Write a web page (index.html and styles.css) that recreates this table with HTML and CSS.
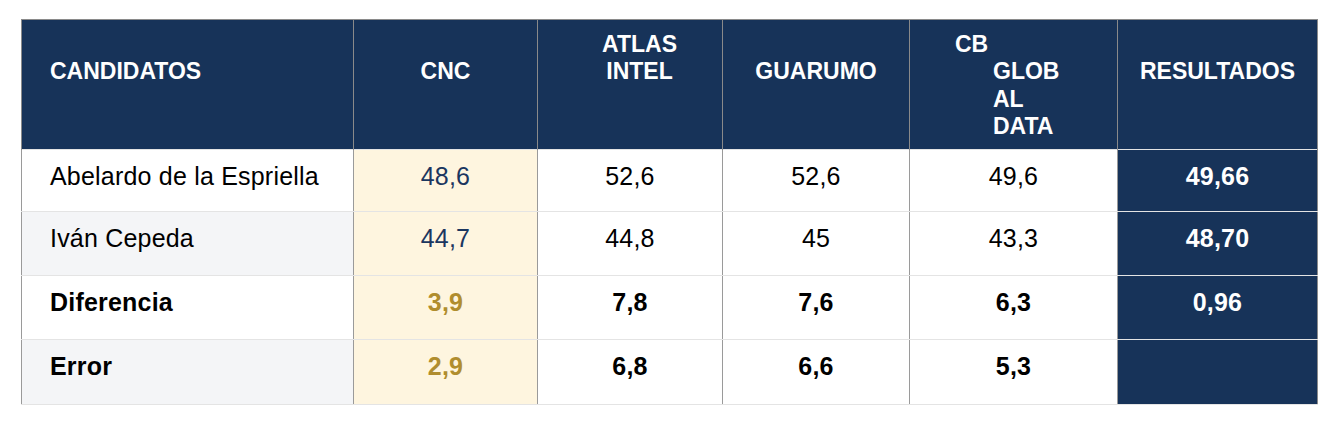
FILE: index.html
```html
<!DOCTYPE html>
<html lang="es">
<head>
<meta charset="utf-8">
<title>Encuestas vs resultados</title>
<link rel="stylesheet" href="styles.css">
</head>
<body>
<table class="poll">
  <colgroup>
    <col class="c-cand">
    <col class="c-cnc">
    <col class="c-atlas">
    <col class="c-guarumo">
    <col class="c-cb">
    <col class="c-res">
  </colgroup>
  <thead>
    <tr>
      <th class="h-left h-line2">CANDIDATOS</th>
      <th class="h-line2">CNC</th>
      <th class="h-atlas">ATLAS<br>INTEL</th>
      <th class="h-line2">GUARUMO</th>
      <th class="h-cb"><span class="cb-first">CB</span><span class="cb-rest">GLOB</span><span class="cb-rest">AL</span><span class="cb-rest">DATA</span></th>
      <th class="h-line2 res">RESULTADOS</th>
    </tr>
  </thead>
  <tbody>
    <tr class="r1">
      <td class="name">Abelardo de la Espriella</td>
      <td class="cnc">48,6</td>
      <td>52,6</td>
      <td>52,6</td>
      <td>49,6</td>
      <td class="res">49,66</td>
    </tr>
    <tr class="r2 alt">
      <td class="name">Iván Cepeda</td>
      <td class="cnc">44,7</td>
      <td>44,8</td>
      <td>45</td>
      <td>43,3</td>
      <td class="res">48,70</td>
    </tr>
    <tr class="r3 strong">
      <td class="name">Diferencia</td>
      <td class="cnc gold">3,9</td>
      <td>7,8</td>
      <td>7,6</td>
      <td>6,3</td>
      <td class="res">0,96</td>
    </tr>
    <tr class="r4 strong alt">
      <td class="name">Error</td>
      <td class="cnc gold">2,9</td>
      <td>6,8</td>
      <td>6,6</td>
      <td>5,3</td>
      <td class="res"></td>
    </tr>
  </tbody>
</table>
</body>
</html>
```
FILE: styles.css
```css
html, body {
  margin: 0;
  padding: 0;
  background: #ffffff;
}

body {
  padding: 19px 0 0 21px;
  font-family: "Liberation Sans", Arial, Helvetica, sans-serif;
}

.poll {
  border-collapse: collapse;
  table-layout: fixed;
  width: 1296px;
  border-top: 1px solid #8a8a8a;
  border-left: 1px solid #8a8a8a;
  border-right: 1px solid #8a8a8a;
  border-bottom: 1px solid #e4e4e4;
}

.c-cand { width: 332px; }
.c-cnc { width: 184px; }
.c-atlas { width: 185px; }
.c-guarumo { width: 187px; }
.c-cb { width: 208px; }
.c-res { width: 200px; }

/* header */
.poll th {
  background: #173359;
  color: #ffffff;
  font-size: 23px;
  font-weight: 700;
  line-height: 27.4px;
  height: 130px;
  box-sizing: border-box;
  vertical-align: top;
  text-align: center;
  padding: 11px 0 0 0;
  border-left: 1px solid #8a8a8a;
  border-right: 1px solid #8a8a8a;
}

.poll th.h-line2 {
  padding-top: 38px;
}

.poll th.h-left {
  text-align: left;
  padding-left: 28px;
}

.poll th.h-atlas {
  padding-left: 19px;
}

.poll th.h-cb {
  text-align: left;
}

.cb-first {
  display: block;
  padding-left: 45px;
}

.cb-rest {
  display: block;
  padding-left: 83px;
}

/* body */
.poll td {
  font-size: 25px;
  letter-spacing: 0.2px;
  line-height: 28px;
  color: #000000;
  text-align: center;
  vertical-align: top;
  padding: 12px 0 0 0;
  background: #ffffff;
  border-top: 1px solid #e4e4e4;
  border-bottom: 1px solid #e4e4e4;
  border-left: 1px solid #9a9a9a;
  border-right: 1px solid #9a9a9a;
}

.poll tr.r1 td { height: 62px; box-sizing: border-box; }
.poll tr.r2 td,
.poll tr.r3 td { height: 64px; box-sizing: border-box; }
.poll tr.r4 td { height: 65px; box-sizing: border-box; }

.poll td.name {
  text-align: left;
  padding-left: 28px;
}

.poll tr.alt td.name {
  background: #f4f5f7;
}

.poll td.cnc {
  background: #fef5df;
  color: #1b365f;
}

.poll td.cnc.gold {
  color: #b08d2e;
}

.poll tr.strong td {
  font-weight: 700;
}

.poll td.res {
  background: #173359;
  color: #ffffff;
  font-weight: 700;
  border-top-color: #e4e4e4;
  border-right-color: #8a8a8a;
}

.poll th.res {
  border-right-color: #8a8a8a;
}
```
